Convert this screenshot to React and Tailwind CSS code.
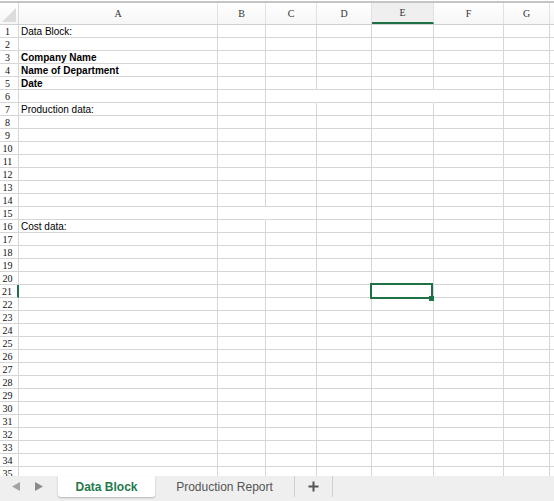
import React from "react";

const cols = [
  { key: "A", w: "w-[199px]" },
  { key: "B", w: "w-[48px]" },
  { key: "C", w: "w-[51px]" },
  { key: "D", w: "w-[55px]" },
  { key: "E", w: "w-[62px]" },
  { key: "F", w: "w-[70px]" },
  { key: "G", w: "w-[46px]" },
];

const cells = {
  1: { text: "Data Block:" },
  3: { text: "Company Name", bold: true },
  4: { text: "Name of Department", bold: true },
  5: { text: "Date", bold: true },
  7: { text: "Production data:" },
  16: { text: "Cost data:" },
};

// merged cells: no right border on these
const noRight = {
  6: ["C", "E"],
  15: ["B"],
};

const rows = Array.from({ length: 35 }, (_, i) => i + 1);

function HeaderRow() {
  return (
    <div className="flex h-[24px] border-t-2 border-t-[#c4c4c4] border-b border-b-[#cfcfcf] bg-gradient-to-b from-white to-[#f6f6f6]">
      <div className="w-[19px] shrink-0 border-r border-r-[#d9d9d9] flex items-end justify-end pr-[2px] pb-[2px]">
        <svg width="14" height="14" viewBox="0 0 14 14">
          <polygon points="14,0 14,14 0,14" fill="#dcdcdc" />
        </svg>
      </div>
      {cols.map((c) => (
        <div
          key={c.key}
          className={`${c.w} shrink-0 border-r border-r-[#e2e2e2] flex items-center justify-center text-[10px] text-[#333] ${
            c.key === "E" ? "bg-[#efefef] border-b-2 border-b-[#1d7145]" : ""
          }`}
          style={{ fontFamily: '"Liberation Serif", serif' }}
        >
          {c.key}
        </div>
      ))}
      <div className="flex-1" />
    </div>
  );
}

function Row({ n }) {
  const data = cells[n];
  const merged = noRight[n] || [];
  return (
    <div className="flex h-[13px] shrink-0">
      <div
        className={`w-[19px] shrink-0 h-[13px] border-b border-b-[#d6d6d6] text-[10px] leading-[13px] text-center pr-[3px] text-[#111] ${
          n === 21 ? "border-r-2 border-r-[#1d7145]" : "border-r border-r-[#d6d6d6]"
        }`}
        style={{ fontFamily: '"Liberation Serif", serif' }}
      >
        {n}
      </div>
      {cols.map((c) => (
        <div
          key={c.key}
          className={`${c.w} shrink-0 h-[13px] relative border-b border-b-[#d6d6d6] ${
            merged.includes(c.key) ? "border-r border-r-white" : "border-r border-r-[#d6d6d6]"
          }`}
        >
          {c.key === "A" && data && (
            <div
              className={`pl-[2px] text-[10px] leading-[13px] text-black whitespace-nowrap ${
                data.bold ? "font-bold" : ""
              }`}
              style={{ fontFamily: '"Liberation Sans", Arial, sans-serif' }}
            >
              {data.text}
            </div>
          )}
          {c.key === "E" && n === 21 && (
            <div className="absolute -left-[2px] -top-[2px] w-[63px] h-[16px] border-2 border-[#1d7145] z-10">
              <div className="absolute -right-[3px] -bottom-[4px] w-[5px] h-[5px] bg-[#1d7145]" />
            </div>
          )}
        </div>
      ))}
      <div className="flex-1 border-b border-b-[#d6d6d6]" />
    </div>
  );
}

function TabBar() {
  return (
    <div
      className="h-[25px] bg-[#efefef] flex items-start text-[12px]"
      style={{ fontFamily: '"Liberation Sans", Arial, sans-serif' }}
    >
      <div className="w-[58px] h-[21px] flex items-center">
        <svg className="ml-[12px]" width="8" height="9" viewBox="0 0 8 9">
          <polygon points="8,0 8,9 0,4.5" fill="#a3a3a3" />
        </svg>
        <svg className="ml-[15px]" width="8" height="9" viewBox="0 0 8 9">
          <polygon points="0,0 0,9 8,4.5" fill="#8c8c8c" />
        </svg>
      </div>
      <div className="w-[97px] h-[21px] bg-white rounded-b-[3px] shadow-[0_1px_2px_rgba(0,0,0,0.25)] flex items-center justify-center font-bold text-[#1e7a4a]">
        Data Block
      </div>
      <div className="w-[140px] h-[21px] flex items-center justify-center text-[#555] border-r border-r-[#d0d0d0]">
        Production Report
      </div>
      <div className="w-[38px] h-[21px] flex items-center justify-center border-r border-r-[#d0d0d0]">
        <svg width="11" height="11" viewBox="0 0 11 11">
          <path d="M5.5 0.5v10M0.5 5.5h10" stroke="#555" strokeWidth="2" />
        </svg>
      </div>
    </div>
  );
}

export default function App() {
  return (
    <div className="w-[554px] h-[501px] bg-white overflow-hidden flex flex-col">
      <div className="h-[1px] bg-white" />
      <HeaderRow />
      <div className="h-[451px] overflow-hidden flex flex-col">
        {rows.map((n) => (
          <Row key={n} n={n} />
        ))}
      </div>
      <TabBar />
    </div>
  );
}
